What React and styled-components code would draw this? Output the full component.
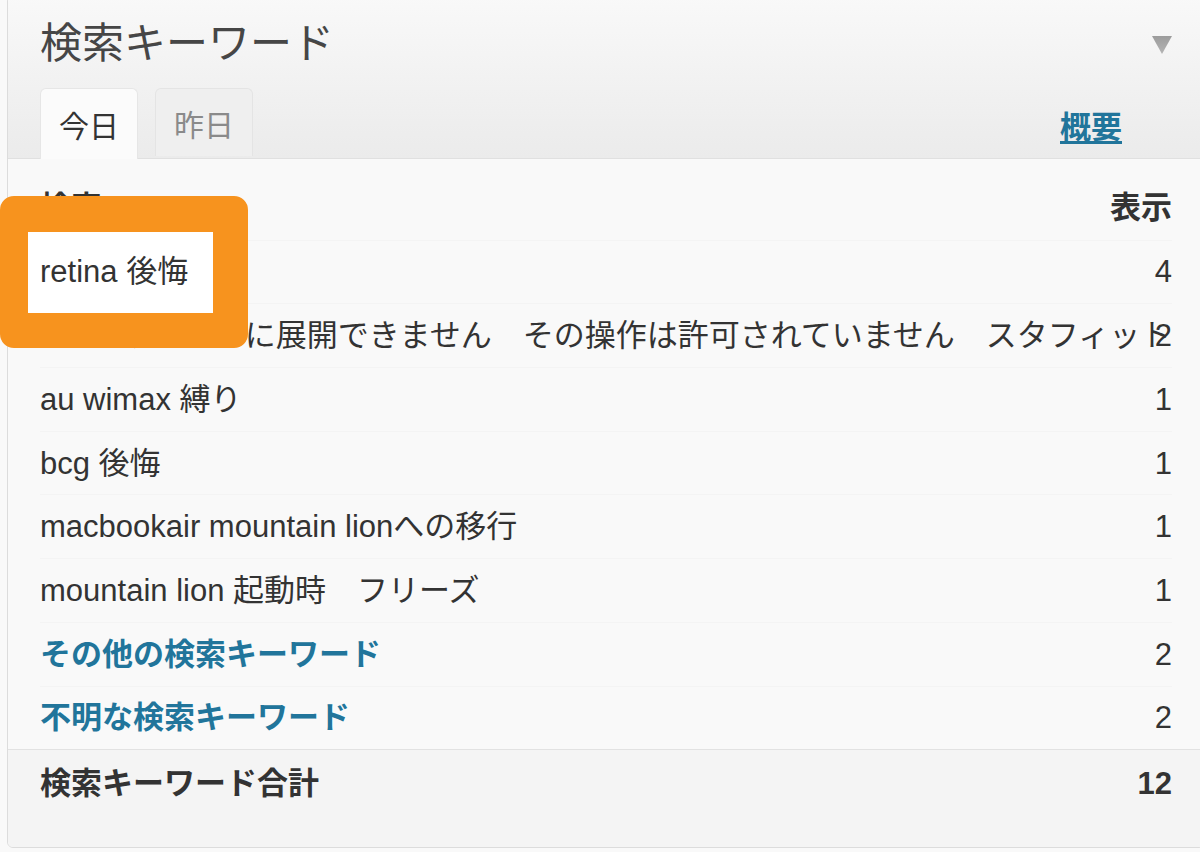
import styled, { createGlobalStyle } from "styled-components";

const FONT = `"Liberation Sans", "Noto Sans CJK JP", sans-serif`;

const GlobalStyle = createGlobalStyle`
  html, body {
    margin: 0;
    padding: 0;
    background: #f9f9f9;
    overflow: hidden;
  }
  body {
    font-family: ${FONT};
    color: #333;
  }
`;

const rows = [
  { term: "retina 後悔", count: 4, highlight: true },
  {
    term: "WPをサーバーに展開できません　その操作は許可されていません　スタフィット",
    count: 2,
  },
  { term: "au wimax 縛り", count: 1 },
  { term: "bcg 後悔", count: 1 },
  { term: "macbookair mountain lionへの移行", count: 1 },
  { term: "mountain lion 起動時　フリーズ", count: 1 },
  { term: "その他の検索キーワード", count: 2, link: true },
  { term: "不明な検索キーワード", count: 2, link: true },
];

const App = () => {
  return (
    <Page>
      <GlobalStyle />
      <Widget>
        <Header>
          <TitleRow>
            <Title>検索キーワード</Title>
            <Toggle viewBox="0 0 20 18">
              <defs>
                <linearGradient id="tri" x1="0" y1="0" x2="0" y2="1">
                  <stop offset="0" stopColor="#9c9c9c" />
                  <stop offset="1" stopColor="#b4b4b4" />
                </linearGradient>
              </defs>
              <polygon points="0,0 20,0 10,18" fill="url(#tri)" />
            </Toggle>
          </TitleRow>
          <Tabs>
            <Tab active>今日</Tab>
            <Tab>昨日</Tab>
            <Summary href="#">概要</Summary>
          </Tabs>
        </Header>
        <Body>
          <Row>
            <HeadCell>検索</HeadCell>
            <HeadCell>表示</HeadCell>
          </Row>
          {rows.map((r) => (
            <Row key={r.term}>
              <Term>
                {r.link ? (
                  <TermLink href="#">{r.term}</TermLink>
                ) : r.highlight ? (
                  <Lifted>{r.term}</Lifted>
                ) : (
                  r.term
                )}
              </Term>
              <Count>{r.count}</Count>
            </Row>
          ))}
        </Body>
        <Footer>
          <Row>
            <HeadCell>検索キーワード合計</HeadCell>
            <HeadCell>12</HeadCell>
          </Row>
        </Footer>
      </Widget>
      <Callout />
    </Page>
  );
};
export default App;

const Page = styled.div`
  position: relative;
  width: 1200px;
  height: 852px;
  overflow: hidden;
`;
const Widget = styled.div`
  width: 1196px;
  margin: -5px 0 0 7px;
  border: 1px solid #dcdcdc;
  border-radius: 6px;
  overflow: hidden;
  background: #f9f9f9;
`;
const Header = styled.div`
  padding-top: 23px;
  background: linear-gradient(#f9f9f9, #ebebeb);
  border-bottom: 1px solid #e0e0e0;
`;
const TitleRow = styled.div`
  display: flex;
  align-items: center;
  justify-content: space-between;
  padding: 0 32px;
  height: 50px;
`;
const Title = styled.h3`
  margin: 0;
  font-size: 42px;
  font-weight: normal;
  line-height: 50px;
  color: #464646;
`;
const Toggle = styled.svg`
  width: 20px;
  height: 18px;
  margin-top: 2px;
`;
const Tabs = styled.div`
  display: flex;
  align-items: flex-end;
  gap: 17px;
  padding: 0 32px;
  margin-top: 19px;
  margin-bottom: -1px;
`;
const Tab = styled.div`
  box-sizing: border-box;
  height: ${(p) => (p.active ? "71px" : "68px")};
  margin-bottom: ${(p) => (p.active ? "0" : "3px")};
  padding: 0 18px;
  display: flex;
  align-items: center;
  font-size: 30px;
  color: ${(p) => (p.active ? "#333" : "#8a8a8a")};
  background: ${(p) => (p.active ? "#fbfbfb" : "#efefef")};
  border: 1px solid ${(p) => (p.active ? "#e6e6e6" : "#e4e4e4")};
  border-bottom: none;
  border-radius: 6px 6px 0 0;
`;
const Summary = styled.a`
  margin-left: auto;
  margin-right: 50px;
  align-self: center;
  margin-top: 2px;
  font-size: 31px;
  font-weight: bold;
  color: #21759b;
  text-decoration: underline;
  text-underline-offset: 3px;
`;
const Body = styled.div`
  padding: 17px 32px 0;
  background: #f9f9f9;
`;
const Row = styled.div`
  box-sizing: border-box;
  display: grid;
  grid-template-columns: minmax(0, 1fr) auto;
  align-items: center;
  height: 63.7px;
  font-size: 31px;
  line-height: 1.2;
  & + & {
    border-top: 1px solid #f4f4f4;
  }
`;
const HeadCell = styled.div`
  font-weight: bold;
  color: #333;
  white-space: nowrap;
  &:last-child {
    text-align: right;
  }
`;
const Term = styled.div`
  white-space: nowrap;
  overflow: visible;
  color: #333;
`;
const Lifted = styled.span`
  position: relative;
  z-index: 3;
`;
const TermLink = styled.a`
  color: #21759b;
  font-weight: bold;
  text-decoration: none;
`;
const Count = styled.div`
  text-align: right;
  color: #333;
`;
const Footer = styled.div`
  border-top: 1px solid #e2e2e2;
  background: #f4f4f4;
  padding: 0 32px 31px;
  & > div {
    height: 66px;
  }
`;
const Callout = styled.div`
  position: absolute;
  left: 0;
  top: 196px;
  width: 248px;
  height: 152px;
  box-sizing: border-box;
  border-style: solid;
  border-color: #f7931e;
  border-width: 36px 35px 35px 28px;
  border-radius: 14px;
  background: #fff;
  z-index: 2;
`;
